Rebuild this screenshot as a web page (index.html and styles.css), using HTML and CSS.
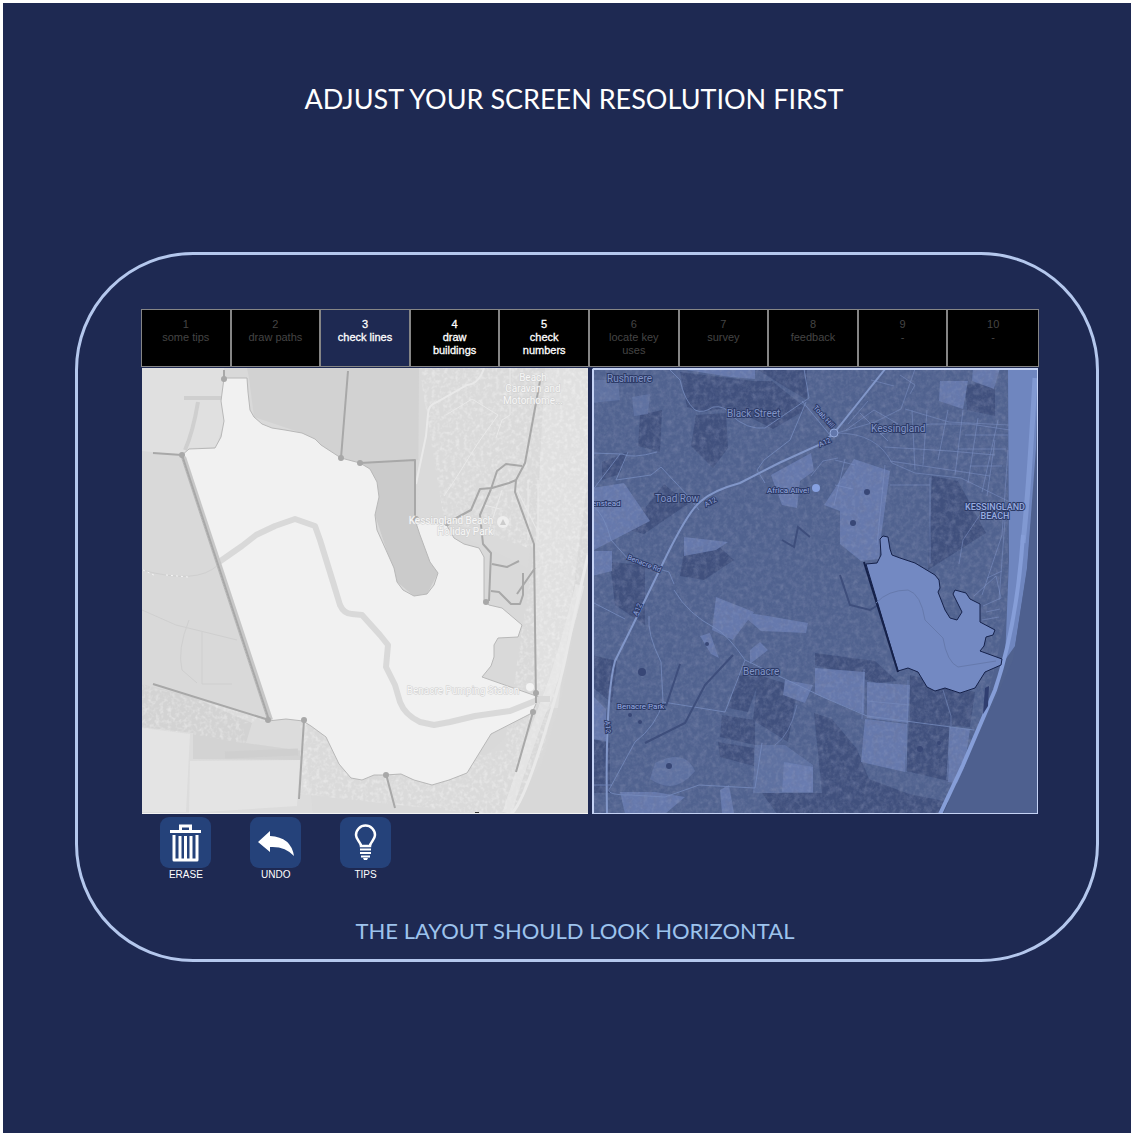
FILE: index.html
```html
<!DOCTYPE html>
<html lang="en">
<head>
<meta charset="utf-8">
<meta name="viewport" content="width=device-width, initial-scale=1">
<title>Adjust your screen resolution first</title>
<link rel="stylesheet" href="styles.css">
</head>
<body>
<main class="page">
  <h1 class="title">ADJUST YOUR SCREEN RESOLUTION FIRST</h1>
  <section class="frame">
    <nav class="steps">
      <button class="step" type="button" disabled>1<br>some tips</button>
      <button class="step" type="button" disabled>2<br>draw paths</button>
      <button class="step step-current" type="button">3<br>check lines</button>
      <button class="step step-open" type="button">4<br>draw<br>buildings</button>
      <button class="step step-open" type="button">5<br>check<br>numbers</button>
      <button class="step" type="button" disabled>6<br>locate key<br>uses</button>
      <button class="step" type="button" disabled>7<br>survey</button>
      <button class="step" type="button" disabled>8<br>feedback</button>
      <button class="step" type="button" disabled>9<br>-</button>
      <button class="step" type="button" disabled>10<br>-</button>
    </nav>
    <div class="maps">
      <svg class="map" viewBox="142 368 446 446" role="img" aria-label="Site map">
        <defs>
          <filter id="grain" x="0" y="0" width="100%" height="100%">
            <feTurbulence type="fractalNoise" baseFrequency="0.25" numOctaves="4" seed="4"/>
            <feColorMatrix values="0 0 0 0 1  0 0 0 0 1  0 0 0 0 1  1.6 0 0 0 -0.7"/>
            <feComposite in2="SourceGraphic" operator="in"/>
          </filter>
          <filter id="grain-dark" x="0" y="0" width="100%" height="100%">
            <feTurbulence type="fractalNoise" baseFrequency="0.15" numOctaves="5" seed="9"/>
            <feColorMatrix values="0 0 0 0 0.15  0 0 0 0 0.19  0 0 0 0 0.36  2.4 0 0 0 -1"/>
            <feComposite in2="SourceGraphic" operator="in"/>
          </filter>
        </defs>
        <path fill="#d9d9d9" d="M142 368h446v446H142z"/>
        <path fill="#e0e0e0" d="M142 368h82l-2 30 3 22-9 27-26 1-8 7-40-4z"/>
        <path fill="#d2d2d2" d="M247 368h172v92l-59 3-19-5-39-25-48-16-5-39z"/>
        <path fill="#dadada" d="M419 368h131l-22 200-40-20-70-30z"/>
        <path fill="#e0e0e0" d="M545 368h43v110l-30 230-8 0-14-8-2-130z"/>
        <path fill="#d8d8d8" d="M588 555l-10 55-16 85-20 68-32 51h78z"/>
        <path fill="#dcdcdc" d="M142 684l126 36 36 0 9 94H142z"/>
        <path fill="#d3d3d3" d="M142 684l50 13 60 26-6 20 57 8-3 9-107-1v-26l-51-6z"/>
        <path fill="#e4e4e4" d="M142 728l48 6-4 78h-44zM190 761l110-1-3 46-108 7z"/>
        <path fill="#dadada" d="M313 814l-9-94 36 43 23 16 70 5 35-12 65-60-10 50-18 52z"/>
        <path class="grain-light" filter="url(#grain)" d="M419 368h169v187l-10 55-35 140-30 64H480l-180-20V720h-32L142 684v44l50 6 55 10-5-20 26-4 36 0 100 50 100-20 30-200-90-30z"/>
        <g fill="none" stroke="#e9e9e9">
          <path stroke-width="2" d="M484 368q-5 16-17 17l-30 17q-9 3-9 12l-2 22-10 48"/>
          <path d="M510 365v50l-8 5-6 18M446 415l26-16 26 16-20 28-22 35-12 18M502 490l-13 40M517 490l22 44M528 480v60M538 480v60M484 505l16 4"/>
          <path stroke-width="9" stroke-opacity=".65" d="M580 585q-20 80-35 118t-38 110"/>
          <path stroke-width="3" d="M588 555q-16 70-22 100t-25 90-30 69"/>
        </g>
        <g fill="none" stroke="#cfcfcf">
          <path stroke-width="4" d="M184 398h39M198 402q-5 30-13 48"/>
          <path d="M142 570q55 15 76-5M142 610l34 15 61 15M202 632v52h30M189 620q-12 30-7 50l15 13"/>
          <path stroke-width="7" d="M225 755l73-3"/>
        </g>
        <path stroke="#f5f5f5" stroke-dasharray="2 3" d="M143 570l13 6m10-1 22 2"/>
        <path fill="#cbcbcb" d="M360 463l55-3v60l23 53-11 21-13 2-17-14-22-67 4-18-2-15z"/>
        <path class="site" d="M224 378h23l1 14 2 18 4 7 8 7 10 4 13 2 17 3 13 6 6 6 20 13 19 5 10 6 7 13 2 15-4 18 2 15 9 20 8 18 3 14 6 8 11 6 13-2 7-9 4-12-8-11-10-27-5-15 31 4 8 14 10 6 15 4 5 9v44l5 4 13 3 20 17-4 12-20 1-4 7v12l-3 9-9 11 57 20-7 16-41 21-24 39-18 7-17 5-18-5-13-6-16 1h-11l-12 5-11-2-12-14-13-27-15-11-8-5-17-2-18 2-87-265 8-7 26-1 6-11 3-16-3-20z"/>
        <path class="river" d="M219 562l23-16 14-11 19-9 20-7 20 7 5 14 13 42 7 23q4 9 12 9l10 1 18 20 8 10-2 22 9 18 5 17q5 13 20 20l14 3 16-3 25-6 35-5 30-12h10"/>
        <path class="river-edge" d="M184 457l87 263"/>
        <g class="trail">
          <path d="M224 370v8M153 453l29 2 87 265-116-36M348 371l-7 87M360 463l55-3v59M447 523l24-13 9-21 12-1 17-5 7-3-1 12 19 52 2 159M540 381l-15 82-9 17M522 466l-16-2-9 7-6 18-11 26 3 29 8 9-2 48M492 564l15 3 12-6M535 568l-18 26M491 591l8 1 12 12h9l3-9V573M304 720l-5 79M386 774l9 34M533 712l-17 60"/>
          <g fill="#a8a8a8" stroke="none"><circle cx="224" cy="379" r="3"/><circle cx="182" cy="455" r="3"/><circle cx="341" cy="458" r="3"/><circle cx="360" cy="463" r="3"/><circle cx="416" cy="519" r="3"/><circle cx="447" cy="523" r="3"/><circle cx="486" cy="602" r="3"/><circle cx="536" cy="693" r="3"/><circle cx="533" cy="712" r="3"/><circle cx="386" cy="775" r="3"/><circle cx="304" cy="720" r="3"/><circle cx="268" cy="720" r="3"/></g>
        </g>
        <circle cx="503" cy="522" r="6" fill="#eee"/><path fill="#ccc" d="M500 525l3-6 3 6z"/>
        <circle cx="530" cy="687" r="4" fill="#f3f3f3"/>
        <g class="place-light">
          <text x="533" y="381">Beach</text><text x="533" y="392">Caravan and</text><text x="533" y="404">Motorhome...</text>
          <text x="451" y="524">Kessingland Beach</text><text x="465" y="535">Holiday Park</text>
          <text x="463" y="694">Benacre Pumping Station</text>
        </g>
        <path stroke="#f4f4f4" d="M142 813.500h446"/><path stroke="#333" d="M475 812.500h4"/>
      </svg>
      <svg class="map" viewBox="592 368 446 446" role="img" aria-label="Area map">
        <path fill="#50628f" d="M592 368h446v446H592z"/>
        <g fill="#3d4d7a" fill-opacity=".85">
          <path d="M680 372l74 9 18 0 35 28-34 20-43-22-27 5-16-5z"/><path d="M696 415l30-2 2 35-15 20-22-22z"/><path d="M755 368h52v32l-30-18z"/>
          <path d="M640 415l22-5-2 42-22-6zM602 462l26-10-8 22-18 6zM628 530l36-46 24 20-44 30zM610 562l35 3v60l-30-20z"/>
          <path d="M592 655l25 6-5 42-20-16zM738 675l22 3-12 34-20-4zM758 675l40 12-10 55-35-22zM722 715l33 5 0 25-35-8zM718 742l36 6v18l-34-9z"/>
          <path d="M932 476l26 5 28 52-58 37zM965 385l30-4v35l-28-6z"/><path d="M909 722l40 4-1 55-42-10z"/>
          <path d="M592 739l18 4v50h-18zM815 653l60 8 22 20-20 2-62-18z"/><path d="M910 675l65 17-5 35-60-4z"/>
          <path d="M684 552l30-10 20 18-30 20-24-4zM762 793h60l-8-80 18 6 25 30 12 30 40 15 50 10-15 10h-167z"/>
        </g>
        <g fill="#6b80b4" fill-opacity=".8">
          <path d="M680 369h75v10l-25-2zM771 475l40-22 3 18-14 10-3 27-15-3zM592 488l32-5 26 38-58 30zM592 551h20v20l-20 5z"/>
          <path d="M684 537l44 5-12 8-32 6zM716 597l38 15-21 28-21-10zM700 636l10-3 9 25-8-4zM738 611l70 12-2 10-45-2zM750 650l10-8 8 8-18 14z"/>
          <path d="M854 459l36 12-9 66-2 22-18 2-21-17v-33l-16-6z"/><path d="M973 368h27l-6 21-22-8zM940 381h28l-5 28-24-8z"/>
          <path d="M815 668l50 4-1 42-49-20zM867 682l43 3-2 38-41-5zM865 719l42 5-2 48-44-10zM950 727l20 2-8 55-14-2zM785 680l28 5-8 18-22-8z"/>
          <path d="M620 792h35l30 5-20 17h-40zM784 762l29 5v25h-31zM720 790l9-5 5 28-12 0zM592 695l14 14v32l-14-2z"/>
          <path fill-opacity=".5" d="M592 380h26l2 20-28 3zM632 397l18-3-2 20-14 2zM655 763q30-15 40 8-20 25-45 8zM755 745h30l28 20v28h-60z"/>
        </g>
        <path class="grain-dark" filter="url(#grain-dark)" d="M592 368h416v240l-26 116-40 90H592z"/>
        <path class="grain-soft" filter="url(#grain)" d="M592 368h416v240l-26 116-40 90H592z"/>
        <path fill="#6f86bf" d="M1008 368h30l-2 80-9 120-12 78-10 14 4-100z"/>
        <path fill="#4e608f" d="M1038 440l-11 130-14 90-39 86-31 68h95z"/>
        <g fill="none" stroke="#768bbd">
          <path stroke-width="5" stroke="#89a1da" stroke-opacity=".7" d="M1035 378q-6 110-12 165"/>
          <path stroke-width="4" stroke="#869ed8" d="M1023 535q-6 90-28 155l-32 75-23 49"/>
          <path stroke-width="2" stroke="#8297c9" d="M886 368l-52 65-13 11-42 19-39 20q-26 7-39 18-13 10-38 62t-48 98q-10 37-8 153"/>
          <path stroke-opacity=".8" d="M668 368l12 12q4 20 15 30 8 4 18-3 12-2 18 8 16 15 34 13l44-30-6-35M802 401l28 34M806 402l-16 38-26 20-7 10 8 13M592 453l30 1q10 5 35-2M620 454l-28 37M628 452l-12 28 35-5 10-8 28 30 10 13M592 505q12 8 19 35l18 20 40 12 5 12"/>
          <path stroke-opacity=".8" d="M674 590q14 24 41 38 12 6 30 32l80 38 42 18 107 14M745 660l-20 52-62-10-2-40q-14-28-12-46M663 702q-7 24-28 40l-25 46q-6 7 20 7l35 2 34-12 56 3 7-45M592 602l33 17M592 785h20"/>
          <path stroke-opacity=".6" d="M775 745q15-10 22-40M864 669l-2 50M908 680l-2 92M867 701l42 4M950 727l-3 53M915 369l-14 40-26 13-38 11q40 0 55 30l23 10 46 5 49 24M905 409l44 13 60 3M943 690l8 26v10"/>
        </g>
        <g class="streets">
          <path d="M880 434l50-10 40 0 40 6M885 447l65 4 45 4M890 461l100 15M948 410l-10 50M963 410l-8 65M978 418l-10 65M998 420l-16 72M846 430l28-20 24 14M848 424l20-23M860 413l28 28M912 410l3 60M927 410l-4 55M970 466h32M958 449h48M965 435h43M995 440l-8 56M1008 450l-6 85-20 60M990 500l-27 40-4 24M1005 520l-6 80M987 578l15-7M974 596l22-20 5 22-18 8M986 612l14-3M982 620l17-3M894 386l-23-6M900 375l15 10-5 9"/>
          <path d="M845 459l-11 46M835 460l20 5M835 485l18 4M838 458l-15 3-12 15M890 485h40M930 478v85M885 465l-8 80"/>
        </g>
        <g fill="#384776"><circle cx="867" cy="492" r="3"/><circle cx="853" cy="523" r="3"/><circle cx="669" cy="766" r="3"/><circle cx="707" cy="644" r="2"/><circle cx="920" cy="749" r="3"/><circle cx="939" cy="743" r="2"/><circle cx="642" cy="672" r="4"/><circle cx="630" cy="715" r="2"/><circle cx="640" cy="722" r="2"/></g>
        <path fill="#303e70" d="M985 688l4-2-1 20-5 8z"/>
        <g fill="none" stroke="#3e4e7c" stroke-width="2"><path d="M680 664l-14 42M733 655l-28 30-20 38-40 20M840 575l10 30 20 5 16-10M782 540l12 7 4-20 12 10"/></g>
        <circle cx="834" cy="433" r="4" fill="#6277ab" stroke="#93a8da"/>
        <path fill="#7389c2" stroke="#15214a" stroke-linejoin="round" d="M880 539l3-3 5 1 2 12 2 6 8 3 15 5 10 6 10 6 4 5 1 8-2 4 7 18 5 8 7 2 5-8-9-18 2-4 11 3 4 6 10 5v18l15 8-2 5-7 2-2 9-4 5 22 8-1 6-16 7-10 16-15 5-15-5-10 3-8-4-9-15-10-4-10 3-32-107 11-1 4-8z"/>
        <path stroke="#15214a" stroke-width="2" d="M864 562l34 110"/>
        <path fill="none" stroke="#667aad" d="M876 603q12-13 32-13 13 4 17 30l18 18q4 24 15 29l38-6"/>
        <circle cx="816" cy="488" r="4" fill="#86a0e0"/>
        <g class="place-dark">
          <text class="town" x="607" y="382">Rushmere</text><text class="town" x="727" y="417">Black Street</text><text class="town" x="871" y="432">Kessingland</text>
          <text class="town" x="655" y="502">Toad Row</text><text class="town" x="743" y="675">Benacre</text><text class="village" x="592" y="506">enstead</text>
          <text class="village" x="767" y="493">Africa Alive!</text><text class="village" x="617" y="709">Benacre Park</text>
          <text class="beach" x="995" y="510">KESSINGLAND</text><text class="beach" x="995" y="519">BEACH</text>
          <text class="road" transform="translate(706 507) rotate(-28)">A12</text><text class="road" transform="translate(820 447) rotate(-25)">A12</text>
          <text class="road" transform="translate(637 616) rotate(-65)">A12</text><text class="road" transform="translate(605 721) rotate(85)">A12</text>
          <text class="road" transform="translate(627 559) rotate(22)">Benacre Rd</text><text class="road" transform="translate(813 408) rotate(48)">Toab Hill</text>
        </g>
        <path fill="none" stroke="#c5d3f5" stroke-width="2" d="M593 369h445M593 369v444"/>
        <path fill="none" stroke="#c5d3f5" d="M592 813.500h446M1037.500 368v446"/>
      </svg>
    </div>
    <div class="tools">
      <button class="tool" type="button">
        <svg class="tool-icon" viewBox="0 0 51 51" aria-hidden="true"><g fill="none" stroke="#fff"><path stroke-width="3" d="M10 14.500h31M20.500 14v-5h10v5"/><path stroke-width="3" stroke-linejoin="round" d="M14 18v25h23V18"/><path stroke-width="3" d="M20 19v24M25.500 19v24M31 19v24"/></g></svg>
        ERASE
      </button>
      <button class="tool" type="button">
        <svg class="tool-icon" viewBox="0 0 51 51" aria-hidden="true"><path fill="#fff" d="M8 25l12-11v5q21 1 24 20-9-10-24-9v5z"/></svg>
        UNDO
      </button>
      <button class="tool" type="button">
        <svg class="tool-icon" viewBox="0 0 51 51" aria-hidden="true"><path fill="none" stroke="#fff" stroke-width="2.500" d="M21 29c0-4-5-6-5-11a9.500 9.500 0 0 1 19 0c0 5-5 7-5 11z"/><path stroke="#fff" stroke-width="2" d="M20 32.500h11M20 36h11M21 39.500h9"/><path fill="#fff" d="M23 41h5l-1 2h-3z"/></svg>
        TIPS
      </button>
    </div>
    <p class="caption">THE LAYOUT SHOULD LOOK HORIZONTAL</p>
  </section>
</main>
</body>
</html>
```
FILE: styles.css
```css
* { box-sizing: border-box; }
body { margin: 0; background: #1e2952; }
.page {
  min-height: 100vh;
  padding: 76px 32px 0 72px;
  border: 3px solid #fff;
  border-bottom-width: 1px;
}
.title {
  margin: 0 26px 133px 0;
  font: 400 27px/40px Lato, "Open Sans", sans-serif;
  color: #fff;
  text-align: center;
}
.frame {
  padding: 54px 57px 12px 63px;
  border: 3px solid #b4c7ed;
  border-radius: 118px;
}
.steps {
  display: grid;
  grid-template-columns: repeat(10, 1fr);
  border: 1px solid #858585;
  background: #000;
}
.step {
  display: flex;
  flex-direction: column;
  align-items: center;
  justify-content: flex-start;
  min-height: 56px;
  padding: 8px 4px;
  border: 0;
  border-right: 2px solid #858585;
  background: #000;
  color: #fff;
  font: 11px/13px "Liberation Sans", Arial, sans-serif;
  text-align: center;
}
.step:last-child { border-right: 0; }
.step:disabled { color: #454545; }
.step-current { background: #1e2952; }
.step-current, .step-open { -webkit-text-stroke: 0.3px #fff; }
.maps {
  display: grid;
  grid-template-columns: 1fr 1fr;
  gap: 4px;
  padding: 1px 1px 0;
}
.map { display: block; width: 100%; height: auto; }
.grain-light { opacity: .55; }
.grain-dark { opacity: .5; }
.grain-soft { opacity: .12; }
.site { fill: #f1f1f1; stroke: #b8b8b8; stroke-width: 1; }
.river { fill: none; stroke: #d9d9d9; stroke-width: 6; stroke-linejoin: round; }
.river-edge { stroke: #c7c7c7; stroke-width: 4; }
.trail { fill: none; stroke: #a8a8a8; stroke-width: 2; stroke-linejoin: round; }
.streets { fill: none; stroke: #7f93c8; stroke-opacity: .5; }
.place-light {
  fill: #f7f7f7;
  stroke: #cfcfcf;
  stroke-width: 1px;
  paint-order: stroke;
  font: 10px Roboto, sans-serif;
  text-anchor: middle;
}
.place-dark {
  fill: #98ace0;
  stroke: #2d3b67;
  stroke-width: 2px;
  paint-order: stroke;
  font-family: Roboto, sans-serif;
}
.town { font-size: 10px; fill: #8295c6; }
.village { font-size: 8px; }
.beach { font-size: 9px; font-weight: 500; text-anchor: middle; }
.road { font-size: 7px; }
.tools {
  display: grid;
  grid-template-columns: repeat(10, 1fr);
  padding-top: 3px;
}
.tool {
  display: flex;
  flex-direction: column;
  align-items: center;
  padding: 0;
  border: 0;
  background: none;
  color: #fff;
  font: 10px/14px "Liberation Sans", Arial, sans-serif;
}
.tool-icon { width: 51px; height: 51px; border-radius: 9px; background: #25427a; }
.caption {
  margin: 33px 30px 0 0;
  font: 400 22px/32px Lato, "Open Sans", sans-serif;
  color: #9dc3ed;
  text-align: center;
}
```
